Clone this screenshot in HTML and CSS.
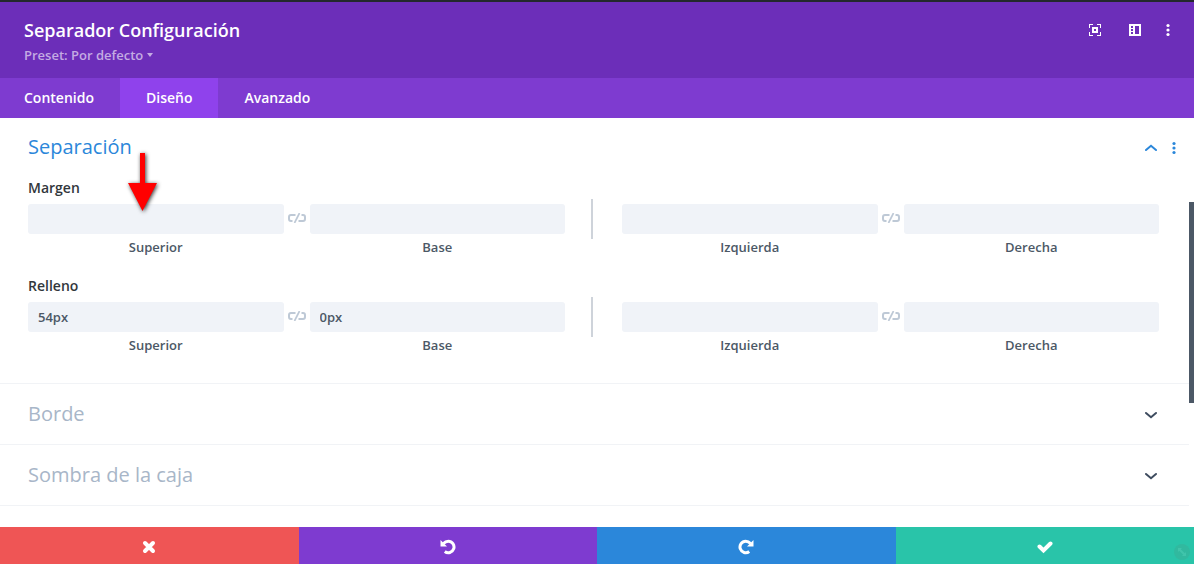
FILE: index.html
```
<!DOCTYPE html>
<html lang="es">
	<head>
		<meta charset="utf-8">
		<title>Separador Configuración</title>
		<link rel="stylesheet" href="styles.css">
	</head>
	<body>
		<svg class="defs" aria-hidden="true">
			<symbol id="link" viewBox="0 0 18 10">
				<path d="M7.500 2H3Q1 2 1 4V6Q1 8 3 8H4.500" fill="none" stroke="currentColor" stroke-width="2"/>
				<path d="M13.500 2H15Q17 2 17 4V6Q17 8 15 8H10.500" fill="none" stroke="currentColor" stroke-width="2"/>
				<path d="M11.500 0L6.500 10" fill="none" stroke="currentColor" stroke-width="1.700"/>
			</symbol>
			<symbol id="dots" viewBox="0 0 4 14">
				<circle cx="2" cy="2.500" r="1.600"/>
				<circle cx="2" cy="7" r="1.600"/>
				<circle cx="2" cy="11.500" r="1.600"/>
			</symbol>
			<symbol id="chevron" viewBox="0 0 12 8">
				<path d="M1 2L6 6.200L11 2" fill="none" stroke="currentColor" stroke-width="2" stroke-linecap="round"/>
			</symbol>
			<symbol id="rotate" viewBox="0 0 16 16">
				<path d="M3.500 4.500Q5.500 2.300 8.300 2.300A5.700 5.700 0 1 1 4.800 12.500" fill="none" stroke="currentColor" stroke-width="3"/>
				<path d="M.500 1V7.500H7Z"/>
			</symbol>
		</svg>

		<header class="header">
			<div>
				<h1>Separador Configuración</h1>
				<button class="preset">Preset: Por defecto <span class="caret"></span></button>
			</div>
			<div class="tools">
				<button aria-label="Expandir">
					<svg width="12" height="12" viewBox="0 0 12 12"><path d="M0 4V0H4V1H1V4ZM8 0H12V4H11V1H8ZM0 8H1V11H4V12H0ZM11 8H12V12H8V11H11ZM3 3H9V9H3ZM5 5V7H7V5Z" fill-rule="evenodd"/></svg>
				</button>
				<button aria-label="Panel lateral">
					<svg width="12" height="12" viewBox="0 0 12 12"><path d="M0 0H12V12H0ZM2 2V4H4V2ZM2 5V7H4V5ZM2 8V10H4V8ZM6 2V10H10V2Z" fill-rule="evenodd"/></svg>
				</button>
				<button aria-label="Más opciones"><svg width="4" height="14"><use href="#dots"/></svg></button>
			</div>
		</header>

		<nav class="tabs">
			<button>Contenido</button>
			<button class="active">Diseño</button>
			<button>Avanzado</button>
		</nav>

		<main class="content">
			<section class="group open">
				<div class="group_title">
					<h2>Separación</h2>
					<button aria-label="Cerrar"><svg class="up" width="12" height="8"><use href="#chevron"/></svg></button>
					<button aria-label="Opciones"><svg width="4" height="14"><use href="#dots"/></svg></button>
				</div>
				<div class="field">
					<h3>Margen
						<svg class="arrow" width="36" height="66" viewBox="0 0 36 66"><path d="M15 2H20V32H32L17.500 60L3 32H15Z"/></svg>
					</h3>
					<div class="sides">
						<div class="pair">
							<div class="side"><input id="margin_top" type="text"><label for="margin_top">Superior</label></div>
							<button class="link" aria-label="Vincular"><svg width="18" height="10"><use href="#link"/></svg></button>
							<div class="side"><input id="margin_bottom" type="text"><label for="margin_bottom">Base</label></div>
						</div>
						<div class="divider"></div>
						<div class="pair">
							<div class="side"><input id="margin_left" type="text"><label for="margin_left">Izquierda</label></div>
							<button class="link" aria-label="Vincular"><svg width="18" height="10"><use href="#link"/></svg></button>
							<div class="side"><input id="margin_right" type="text"><label for="margin_right">Derecha</label></div>
						</div>
					</div>
				</div>
				<div class="field">
					<h3>Relleno</h3>
					<div class="sides">
						<div class="pair">
							<div class="side"><input id="padding_top" type="text" value="54px"><label for="padding_top">Superior</label></div>
							<button class="link" aria-label="Vincular"><svg width="18" height="10"><use href="#link"/></svg></button>
							<div class="side"><input id="padding_bottom" type="text" value="0px"><label for="padding_bottom">Base</label></div>
						</div>
						<div class="divider"></div>
						<div class="pair">
							<div class="side"><input id="padding_left" type="text"><label for="padding_left">Izquierda</label></div>
							<button class="link" aria-label="Vincular"><svg width="18" height="10"><use href="#link"/></svg></button>
							<div class="side"><input id="padding_right" type="text"><label for="padding_right">Derecha</label></div>
						</div>
					</div>
				</div>
			</section>
			<section class="group">
				<div class="group_title">
					<h2>Borde</h2>
					<button aria-label="Abrir"><svg width="12" height="8"><use href="#chevron"/></svg></button>
				</div>
			</section>
			<section class="group">
				<div class="group_title">
					<h2>Sombra de la caja</h2>
					<button aria-label="Abrir"><svg width="12" height="8"><use href="#chevron"/></svg></button>
				</div>
			</section>
			<div class="scroll_thumb"></div>
		</main>

		<footer class="actions">
			<button class="discard" aria-label="Descartar">
				<svg width="14" height="14" viewBox="0 0 14 14"><path d="M3 3L11 11M11 3L3 11" fill="none" stroke="currentColor" stroke-width="4" stroke-linecap="round"/></svg>
			</button>
			<button class="undo" aria-label="Deshacer"><svg width="16" height="16"><use href="#rotate"/></svg></button>
			<button class="redo" aria-label="Rehacer"><svg class="flip" width="16" height="16"><use href="#rotate"/></svg></button>
			<button class="save" aria-label="Guardar">
				<svg width="16" height="14" viewBox="0 0 16 14"><path d="M2.500 6.500L6.500 10.500L13.500 3.500" fill="none" stroke="currentColor" stroke-width="4" stroke-linecap="round"/></svg>
			</button>
			<div class="resize">
				<svg width="16" height="16" viewBox="0 0 16 16"><circle cx="8" cy="8" r="8" fill="#31b99f"/><path d="M4 4H8L6.800 5.200L10.800 9.200L12 8V12H8L9.200 10.800L5.200 6.800L4 8Z" fill="#40c4ab"/></svg>
			</div>
		</footer>
	</body>
</html>
```
FILE: styles.css
```
* {
	box-sizing: border-box;
}
body {
	display: flex;
	flex-direction: column;
	height: 100vh;
	margin: 0;
	overflow: hidden;
	border-top: 2px solid #23282d;
	background: #fff;
	font-family: "Open Sans", sans-serif;
	font-weight: 600;
}
h1, h2, h3 {
	margin: 0;
}
button {
	padding: 0;
	border: 0;
	background: none;
	color: inherit;
	font: inherit;
	cursor: pointer;
}
svg {
	display: block;
	fill: currentColor;
}
.defs {
	position: absolute;
	width: 0;
	height: 0;
}

.header {
	display: flex;
	justify-content: space-between;
	flex-shrink: 0;
	height: 76px;
	padding: 15px 24px 0;
	background: #6c2eb9;
	color: #fff;
}
.header h1 {
	font-size: 18px;
	font-weight: 600;
	line-height: 26px;
}
.preset {
	display: flex;
	align-items: center;
	gap: 4px;
	color: #c4abe3;
	font-size: 13px;
	line-height: 24px;
}
.caret {
	border: 3px solid transparent;
	border-top: 4px solid;
	border-bottom: 0;
}
.tools {
	display: flex;
	gap: 28px;
	height: 26px;
}
.tools button {
	display: flex;
	align-items: center;
}
.tools button:last-child {
	margin-left: -3px;
}

.tabs {
	display: flex;
	flex-shrink: 0;
	height: 40px;
	background: #7e3bd0;
	color: #fff;
	font-size: 14px;
}
.tabs button {
	padding: 0 26px 2px;
}
.tabs button:first-child {
	padding-left: 24px;
}
.tabs .active {
	background: #8f42ec;
}

.content {
	position: relative;
	flex: 1;
	min-height: 0;
	padding-right: 5px;
	overflow: hidden;
}
.group {
	padding: 0 30px 0 28px;
	border-bottom: 1px solid #f1f3f6;
	color: #a8b6c8;
}
.group_title {
	display: flex;
	align-items: center;
	height: 60px;
}
.group h2 {
	flex: 1;
	padding-bottom: 2px;
	font-size: 20px;
	font-weight: 400;
}
.group_title button {
	margin-right: 2px;
	color: #3e4c5f;
}
.group_title svg {
	margin-top: 1px;
}
.open {
	padding-bottom: 11px;
}
.open h2, .open .group_title button {
	color: #2b87da;
}
.open .group_title {
	height: 58px;
	margin-right: -19px;
}
.open .group_title button+button {
	margin-left: 13px;
}
.open .field:nth-child(2) {
	padding-top: 2px;
}
.open {
	padding-bottom: 9px;
}
.up {
	transform: rotate(180deg);
}

.field {
	padding-bottom: 16px;
}
.field h3 {
	position: relative;
	margin-bottom: 6px;
	color: #32373c;
	font-size: 14px;
	font-weight: 600;
	line-height: 20px;
}
.arrow {
	position: absolute;
	top: -27px;
	left: 97px;
	fill: #f00;
	filter: drop-shadow(1px 1px 2px rgba(0, 0, 0, .8));
}
.sides, .pair {
	display: flex;
}
.pair, .side {
	flex: 1;
	min-width: 0;
}
.side input {
	display: block;
	width: 100%;
	height: 30px;
	padding: 0 10px;
	border: 0;
	border-radius: 3px;
	background: #f0f3f8;
	color: #4c5866;
	font: inherit;
	font-size: 13px;
}
.side label {
	display: block;
	color: #4c5866;
	font-size: 13px;
	line-height: 26px;
	text-align: center;
}
.link {
	display: flex;
	align-items: center;
	justify-content: center;
	width: 26px;
	height: 28px;
	color: #bec9d6;
}
.divider {
	width: 2px;
	height: 40px;
	margin: -5px 29px 0 26px;
	background: #ced3da;
}
.scroll_thumb {
	position: absolute;
	top: 84px;
	right: 0;
	width: 5px;
	height: 201px;
	background: #4c5866;
}

.actions {
	position: relative;
	display: flex;
	flex-shrink: 0;
	height: 37px;
	color: #fff;
}
.actions button {
	display: flex;
	flex: 1;
	align-items: center;
	justify-content: center;
	padding-top: 3px;
}
.discard {
	background: #ef5555;
}
.undo {
	background: #7e3bd0;
}
.redo {
	background: #2b87da;
}
.save {
	background: #29c4a9;
}
.flip {
	transform: scaleX(-1);
}
.resize {
	position: absolute;
	right: 4px;
	bottom: 4px;
}
```
